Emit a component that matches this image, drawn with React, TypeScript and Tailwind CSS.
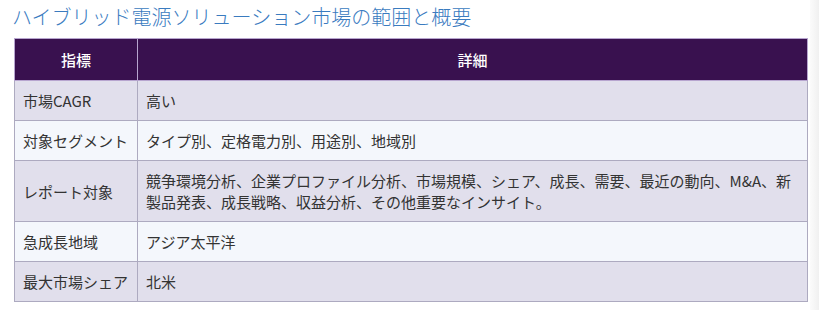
const rows: { label: string; detail: string }[] = [
  { label: '市場CAGR', detail: '高い' },
  { label: '対象セグメント', detail: 'タイプ別、定格電力別、用途別、地域別' },
  {
    label: 'レポート対象',
    detail:
      '競争環境分析、企業プロファイル分析、市場規模、シェア、成長、需要、最近の動向、M&A、新製品発表、成長戦略、収益分析、その他重要なインサイト。',
  },
  { label: '急成長地域', detail: 'アジア太平洋' },
  { label: '最大市場シェア', detail: '北米' },
];

export default function App() {
  return (
    <div className="flex w-[819px] h-[310px] bg-white font-['Noto_Sans_CJK_JP','Noto_Sans',sans-serif] text-[#333]">
      <div className="flex-1 pl-[14px] pr-[2px]">
        <h2 className="-ml-[2px] pt-[4px] h-[38px] text-[20px] leading-[26px] text-[#3a7bbf] font-light">
          ハイブリッド電源ソリューション市場の範囲と概要
        </h2>
        <table className="w-[794px] border-collapse text-[15px] leading-[21px]">
          <thead>
            <tr className="bg-[#39114f] text-white">
              <th className="w-[123px] border border-[#b7a5cf] py-[10px] font-medium text-center">指標</th>
              <th className="border border-[#b7a5cf] py-[10px] font-medium text-center">詳細</th>
            </tr>
          </thead>
          <tbody>
            {rows.map((r, i) => (
              <tr key={r.label} className={i % 2 === 0 ? 'bg-[#e1dfec]' : 'bg-[#f4f7fc]'}>
                <td className="border border-[#adaac0] px-[8px] py-[9px] align-middle whitespace-nowrap">{r.label}</td>
                <td className="border border-[#adaac0] px-[8px] py-[9px] align-middle">{r.detail}</td>
              </tr>
            ))}
          </tbody>
        </table>
      </div>
      <div className="w-[9px] bg-gradient-to-r from-[#fbfbfb] to-[#f0f0f0]" />
    </div>
  );
}
